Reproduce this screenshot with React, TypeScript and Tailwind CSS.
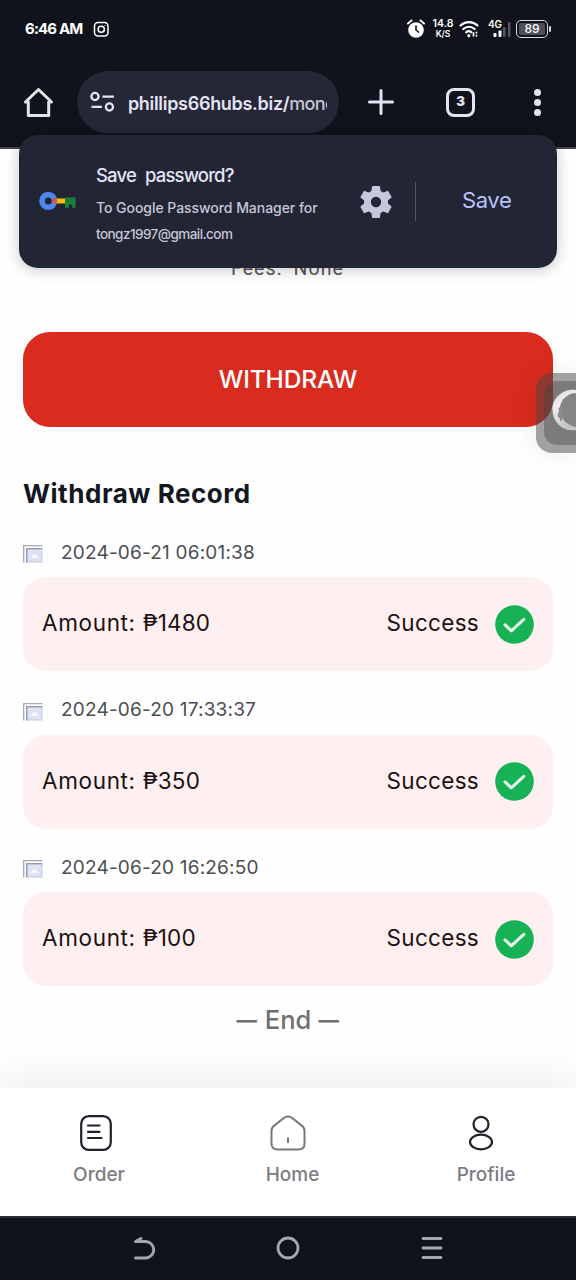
import type { ReactNode } from 'react'

const records = [
  { date: '2024-06-21 06:01:38', amount: '₱1480' },
  { date: '2024-06-20 17:33:37', amount: '₱350' },
  { date: '2024-06-20 16:26:50', amount: '₱100' },
]

function StatusBar() {
  return (
    <div className="flex h-[58px] items-center pl-[25px] pr-[25px] text-white">
      <span className="w-[57px] whitespace-nowrap text-[15px] font-bold tracking-[-0.85px]">6:46 AM</span>
      <svg className="ml-[11px]" width="17" height="17" viewBox="0 0 17 17" fill="none" stroke="currentColor" strokeWidth="1.5">
        <rect x="1.5" y="1.5" width="13.5" height="13.5" rx="3.5" />
        <circle cx="8.25" cy="8.25" r="3.1" />
        <circle cx="12" cy="4.5" r="0.6" fill="currentColor" stroke="none" />
      </svg>
      <svg className="ml-[297px]" width="18" height="20" viewBox="0 0 18 20">
        <circle cx="9" cy="11" r="7.8" fill="#fff" />
        <path d="M1 4.5 4.5 1.6M17 4.5l-3.500-2.900" stroke="#fff" strokeWidth="2" strokeLinecap="round" />
        <path d="M9 6.500V11l3 2.500" stroke="#10131c" strokeWidth="1.600" fill="none" />
      </svg>
      <div className="ml-[7px] w-[22px] whitespace-nowrap text-center text-[10.500px] leading-[11px] font-semibold">
        <div className="-mt-[1px]">14.8</div>
        <div className="text-[8.500px] leading-[10px]">K/S</div>
      </div>
      <svg className="ml-[5px]" width="20" height="18" viewBox="0 0 20 18" fill="none" stroke="#fff" strokeWidth="2.200" strokeLinecap="round">
        <path d="M1.500 5.500C6.500 1 13.500 1 18.500 5.500M4.300 9c3.400-3 8-3 11.400 0M7.200 12.300c1.700-1.400 3.600-1.400 5.200 0" />
        <path d="M9.800 15.500v.2" strokeWidth="3" />
        <path d="M14.500 12.800v3M17.500 12.300v.5M17.500 15.300v.5" strokeWidth="1.700" />
      </svg>
      <svg className="ml-[9px]" width="24" height="20" viewBox="0 0 24 20" fontFamily="Inter, sans-serif">
        <text x="0" y="9" fontSize="10" fontWeight="600" fill="#fff" textLength="14">4G</text>
        <rect x="5.500" y="14" width="3" height="4" rx="1" fill="#fff" />
        <rect x="10.500" y="11.500" width="3" height="6.500" rx="1" fill="#fff" />
        <rect x="15" y="8" width="2.500" height="10" rx="1" fill="#555761" />
        <rect x="20" y="3" width="2.500" height="15" rx="1" fill="#555761" />
      </svg>
      <div className="relative ml-[4px] flex h-[18px] w-[32px] shrink-0 items-center justify-center rounded-[5px] border-[1.5px] border-[#dcdde2] p-[2px]">
        <span className="flex h-full w-full items-center justify-center rounded-[2px] bg-[#4d4e58] text-[12px] font-medium">89</span>
        <span className="absolute top-[5px] -right-[4px] h-[6px] w-[2px] rounded-full bg-[#dcdde2]" />
      </div>
    </div>
  )
}

function AddressBar() {
  return (
    <div className="flex h-[62px] items-center text-[#e3e3f3]">
      <svg className="ml-[23px]" width="31" height="31" viewBox="0 0 31 31" fill="none" stroke="currentColor" strokeWidth="3" strokeLinejoin="round">
        <path d="M2.500 15 15.500 2.500 28.500 15H25.700V28.500H5.300V15Z" />
      </svg>
      <div className="ml-[23px] flex h-[62px] w-[262px] items-center rounded-full bg-[#252736] pl-[13px]">
        <svg width="26" height="22" viewBox="0 0 26 22" fill="none" stroke="currentColor" strokeWidth="2.300">
          <circle cx="5" cy="5.500" r="3.600" />
          <path d="M12.500 5.500H24M1.500 16H12" />
          <circle cx="19.500" cy="16" r="3.600" />
        </svg>
        <div className="mt-[2px] ml-[12px] w-[200px] overflow-hidden whitespace-nowrap text-[18px] font-semibold tracking-[-0.3px]">
          phillips66hubs.biz/<span className="font-medium tracking-[-0.7px] text-[#c5c6d5]">mone</span>
        </div>
        <div className="w-[12px] shrink-0" />
      </div>
      <svg className="ml-[28px]" width="28" height="28" viewBox="0 0 28 28" stroke="currentColor" strokeWidth="3" strokeLinecap="round">
        <path d="M14 2.500v23M2.500 14h23" />
      </svg>
      <div className="ml-[51px] flex h-[29px] w-[29px] items-center justify-center rounded-[8px] border-[3px] border-[#e3e3f3] text-[13px] font-black">
        3
      </div>
      <div className="ml-[59px] flex flex-col gap-[3px]">
        <span className="h-[7px] w-[7px] rounded-full bg-[#e3e3f3]" />
        <span className="h-[7px] w-[7px] rounded-full bg-[#e3e3f3]" />
        <span className="h-[7px] w-[7px] rounded-full bg-[#e3e3f3]" />
      </div>
    </div>
  )
}

function SavePasswordPrompt() {
  return (
    <div className="absolute top-[135px] left-[19px] z-10 flex h-[133px] w-[538px] items-center rounded-[19px] bg-[#222533] shadow-[0_2px_14px_rgba(0,0,0,0.22)]">
      <svg className="ml-[20px] shrink-0" width="37" height="20" viewBox="0 0 37 20">
        <path d="M26 5.500h10.500v10.300h-3.300v-3.300h-3.300v3.300H26Z" fill="#188038" />
        <path d="M17 6.500h9v5h-9Z" fill="#fbbc04" />
        <circle cx="9.300" cy="9" r="6.300" fill="none" stroke="#4c86ee" strokeWidth="5.600" />
        <path d="M12.500 6.500h5.200v5h-5.200a4 4 0 0 0 0-5Z" fill="#d65745" />
      </svg>
      <div className="mt-[4px] ml-[20px] w-[240px] whitespace-nowrap">
        <div className="text-[18.500px] leading-[30px] font-medium tracking-[-0.850px] [word-spacing:5px] text-[#e3e4f4]">Save password?</div>
        <div className="mt-[5px] text-[14px] leading-[26px] font-medium text-[#c6c7d8]">
          <div className="tracking-[-0.05px]">To Google Password Manager for</div>
          <div className="text-[13.500px] tracking-[-0.550px]">tongz1997@gmail.com</div>
        </div>
      </div>
      <svg className="ml-[20px] shrink-0" width="40" height="40" viewBox="0 0 24 24" fill="#c6c7dc">
        <path d="M19.140 12.940c.040-.300.060-.610.060-.940s-.020-.640-.070-.940l2.030-1.580a.49.49 0 0 0 .120-.610l-1.920-3.320a.488.488 0 0 0-.590-.220l-2.390.960c-.500-.380-1.030-.700-1.620-.940l-.360-2.540a.484.484 0 0 0-.480-.410h-3.840c-.240 0-.430.170-.470.410l-.360 2.540c-.590.240-1.130.570-1.620.940l-2.390-.960c-.220-.080-.470 0-.590.220L2.740 8.870c-.120.210-.080.470.120.610l2.030 1.580c-.050.300-.090.630-.090.940s.020.640.070.940l-2.030 1.580a.49.49 0 0 0-.120.610l1.920 3.320c.120.220.370.290.590.220l2.390-.960c.500.380 1.030.700 1.620.940l.360 2.540c.050.240.240.410.480.410h3.840c.240 0 .440-.170.470-.410l.360-2.540c.590-.240 1.130-.560 1.620-.940l2.390.960c.220.080.470 0 .590-.220l1.920-3.320c.120-.220.070-.470-.120-.610zM12 15.100A3.100 3.100 0 1 1 12 8.900a3.100 3.100 0 0 1 0 6.200" />
      </svg>
      <div className="ml-[19px] h-[39px] w-px bg-[#515463]" />
      <span className="-mt-[2px] ml-[46px] text-[22px] font-normal tracking-[-0.4px] text-[#b9c3fa]">Save</span>
    </div>
  )
}

function AssistBubble() {
  return (
    <div className="absolute top-[373px] right-0 z-10 h-[80px] w-[40px] rounded-l-[16px] bg-[#444]/50 py-[8px] pl-[8px] shadow-[0_0_24px_rgba(0,0,0,0.08)]">
      <div className="h-full w-full overflow-hidden rounded-l-[13px] bg-[#444]/40">
        <svg width="32" height="64" viewBox="0 0 32 64">
          <defs>
            <linearGradient id="moon" x1="0" y1="0" x2="0.4" y2="1">
              <stop offset="0" stopColor="#d5d5d5" />
              <stop offset="0.4" stopColor="#efefef" />
              <stop offset="1" stopColor="#c4c4c4" />
            </linearGradient>
          </defs>
          <path d="M32 9C18 7 8 18 8.500 29 9 42 19 51 32 49V46C22 44 16 37 16 28 16 20 22 13 32 13Z" fill="url(#moon)" />
          <path d="M32 12c-9 0-15 7-15 16 0 9 6 16 15 18Z" fill="#858585" />
          <path d="m19 17 1 5-2 2-.5 6 1.500 6-2 5-1.500-4-2-2 1.500-5-.5-3 2-1Z" fill="#8a8a8a" />
        </svg>
      </div>
    </div>
  )
}

function PhotoIcon() {
  return (
    <svg width="20" height="18" viewBox="0 0 20 18">
      <path d="M.7 17.500V.7H19.300" fill="none" stroke="#a9a9b4" strokeWidth="1.300" />
      <rect x="4" y="4" width="15" height="13" fill="#dde2f4" stroke="#c3c7da" strokeWidth="1" />
      <path d="M3.700 17.500V3.700H19.300" fill="none" stroke="#9498aa" strokeWidth="1.300" />
      <path d="m7 13 4.500-4.500 4.500 4.500Z" fill="#f7f8fe" />
    </svg>
  )
}

function RecordItem({ date, amount }: { date: string; amount: string }) {
  return (
    <div className="h-[157.500px]">
      <div className="flex h-[49px] items-center">
        <span className="mt-[3px]"><PhotoIcon /></span>
        <span className="mt-px ml-[18px] text-[19px] tracking-[0.190px] text-[#4c4d53]">{date}</span>
      </div>
      <div className="flex h-[94px] items-center rounded-[23px] bg-[#fef0f0] pr-[19px] pl-[19px] text-[22.500px] text-[#1d1012]">
        <span className="-mt-[2px]">
          <span className="tracking-[0.650px]">Amount: </span>
          <span className="tracking-[0.150px]">{amount}</span>
        </span>
        <span className="-mt-[2px] ml-auto tracking-[0.300px]">Success</span>
        <svg className="ml-[16px]" width="39" height="39" viewBox="0 0 39 39">
          <circle cx="19.500" cy="19.500" r="19.300" fill="#17b255" />
          <path d="m10 19.800 6.300 6 12.500-11.500" fill="none" stroke="#e4fbea" strokeWidth="3" strokeLinecap="round" strokeLinejoin="round" />
        </svg>
      </div>
    </div>
  )
}

function Tab({ label, children }: { label: string; children: ReactNode }) {
  return (
    <div className="flex w-[60px] flex-col items-center">
      <div className="flex h-[38px] items-center pr-[8px]">{children}</div>
      <span className="mt-[9px] text-[19px] leading-[28px] font-medium text-[#7b7c81]">{label}</span>
    </div>
  )
}

export default function App() {
  return (
    <div className="relative flex h-[1280px] w-[576px] flex-col overflow-hidden bg-[#fefefe] font-['Inter',sans-serif]">
      <header className="h-[149px] shrink-0 border-b-2 border-[#43454b] bg-[#10131c]">
        <StatusBar />
        <div className="h-[13px]" />
        <AddressBar />
      </header>
      <SavePasswordPrompt />
      <AssistBubble />

      <main className="flex flex-1 flex-col px-[23px] pt-[106px]">
        <div className="pl-[208px] font-['Roboto',sans-serif] text-[19.500px] leading-[28px] tracking-[1.100px] [word-spacing:5px] whitespace-pre text-[#55565a]">Fees: None</div>
        <button className="mt-[49px] flex h-[95px] shrink-0 items-center justify-center rounded-[27px] bg-[#d92c1f] text-[24.500px] font-medium tracking-[-0.1px] text-white">
          WITHDRAW
        </button>
        <h2 className="mt-[49px] text-[26px] leading-[36px] font-bold tracking-[0.540px] text-[#131722]">Withdraw Record</h2>
        <div className="mt-[16px]">
          {records.map((record) => (
            <RecordItem key={record.date} {...record} />
          ))}
        </div>
        <div className="-mt-[1px] flex items-center justify-center gap-[8px] text-[25.500px] leading-[40px] font-medium text-[#6f7074]">
          <span className="inline-block origin-center scale-x-[0.8] -mx-[3px]">—</span>
          <span>End</span>
          <span className="inline-block origin-center scale-x-[0.8] -mx-[3px]">—</span>
        </div>
      </main>

      <nav className="flex h-[128px] shrink-0 justify-between bg-white pt-[26px] pr-[60px] pl-[69px] shadow-[0_-8px_40px_rgba(0,0,0,0.07)]">
        <Tab label="Order">
          <svg className="ml-[2px]" width="32" height="36" viewBox="0 0 32 36" fill="none" stroke="#20222b" strokeWidth="2.200" strokeLinecap="round">
            <rect x="1.200" y="1.200" width="29.600" height="33.600" rx="7.500" />
            <path d="M8 10.500h11.500M8 16.800h11.500M8 23h13.500" />
          </svg>
        </Tab>
        <Tab label="Home">
          <svg className="mr-[2px]" width="36" height="36" viewBox="0 0 36 36" fill="none" stroke="#77787d" strokeWidth="2">
            <path d="M1.500 16c0-2.500.8-4 2.700-5.400l9.300-7.300c3-2.300 6-2.300 9 0l9.300 7.300c1.900 1.400 2.700 2.900 2.700 5.400v12.500c0 4-2.200 6-6 6h-21c-3.800 0-6-2-6-6Z" />
            <path d="M18 22.500v5.500" />
          </svg>
        </Tab>
        <Tab label="Profile">
          <svg className="mr-[2px]" width="26" height="36" viewBox="0 0 26 36" fill="none" stroke="#20222b" strokeWidth="2.200">
            <circle cx="13" cy="9.300" r="7.500" />
            <ellipse cx="13" cy="27" rx="11" ry="7.300" />
          </svg>
        </Tab>
      </nav>

      <footer className="flex h-[64px] shrink-0 justify-between border-t-2 border-[#303137] bg-[#10131c] pt-[18px] pr-[133px] pl-[132px] text-[#a4a6b0]">
        <svg width="23" height="25" viewBox="0 0 23 25" fill="none" stroke="currentColor" strokeWidth="2.800" strokeLinecap="round" strokeLinejoin="round">
          <path d="M9 2.500 3.500 5.500h10a8 8 0 0 1 0 16.500H3.500" />
        </svg>
        <svg width="24" height="24" viewBox="0 0 24 24" fill="none" stroke="currentColor" strokeWidth="2.800">
          <circle cx="12" cy="12" r="10" />
        </svg>
        <svg width="22" height="24" viewBox="0 0 22 24" stroke="currentColor" strokeWidth="2.800" strokeLinecap="round">
          <path d="M2 2.500h18M2 12h18M2 21.500h18" />
        </svg>
      </footer>
    </div>
  )
}
